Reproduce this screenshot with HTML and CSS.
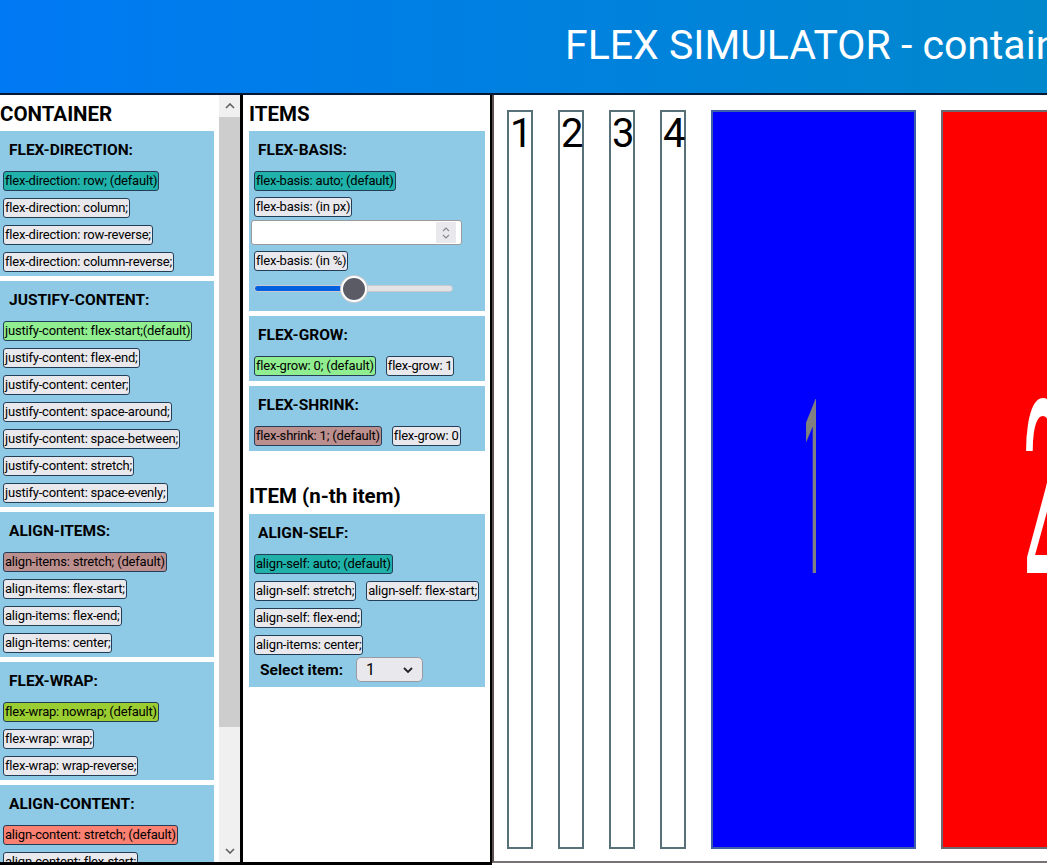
FILE: index.html
```html
<!DOCTYPE html>
<html>
<head>
<meta charset="utf-8">
<link rel="stylesheet" href="styles.css">
</head>
<body>
<header class="header"><h1 class="title">FLEX SIMULATOR - container &amp; items</h1></header>
<main class="main">
  <aside class="container-panel">
    <div class="panel-content">
      <h2 class="panel-title">CONTAINER</h2>
      <section class="group">
        <h3 class="group-title">FLEX-DIRECTION:</h3>
        <div class="btns">
          <div class="row"><button class="btn sel-teal">flex-direction: row; (default)</button></div>
          <div class="row"><button class="btn">flex-direction: column;</button></div>
          <div class="row"><button class="btn">flex-direction: row-reverse;</button></div>
          <div class="row"><button class="btn">flex-direction: column-reverse;</button></div>
        </div>
      </section>
      <section class="group">
        <h3 class="group-title">JUSTIFY-CONTENT:</h3>
        <div class="btns">
          <div class="row"><button class="btn sel-green">justify-content: flex-start;(default)</button></div>
          <div class="row"><button class="btn">justify-content: flex-end;</button></div>
          <div class="row"><button class="btn">justify-content: center;</button></div>
          <div class="row"><button class="btn">justify-content: space-around;</button></div>
          <div class="row"><button class="btn">justify-content: space-between;</button></div>
          <div class="row"><button class="btn">justify-content: stretch;</button></div>
          <div class="row"><button class="btn">justify-content: space-evenly;</button></div>
        </div>
      </section>
      <section class="group">
        <h3 class="group-title">ALIGN-ITEMS:</h3>
        <div class="btns">
          <div class="row"><button class="btn sel-rosy">align-items: stretch; (default)</button></div>
          <div class="row"><button class="btn">align-items: flex-start;</button></div>
          <div class="row"><button class="btn">align-items: flex-end;</button></div>
          <div class="row"><button class="btn">align-items: center;</button></div>
        </div>
      </section>
      <section class="group">
        <h3 class="group-title">FLEX-WRAP:</h3>
        <div class="btns">
          <div class="row"><button class="btn sel-yg">flex-wrap: nowrap; (default)</button></div>
          <div class="row"><button class="btn">flex-wrap: wrap;</button></div>
          <div class="row"><button class="btn">flex-wrap: wrap-reverse;</button></div>
        </div>
      </section>
      <section class="group">
        <h3 class="group-title">ALIGN-CONTENT:</h3>
        <div class="btns">
          <div class="row"><button class="btn sel-salmon">align-content: stretch; (default)</button></div>
          <div class="row"><button class="btn">align-content: flex-start;</button></div>
          <div class="row"><button class="btn">align-content: flex-end;</button></div>
          <div class="row"><button class="btn">align-content: center;</button></div>
        </div>
      </section>
    </div>
    <div class="scrollbar">
      <div class="sb-btn">
        <svg width="10" height="6" viewBox="0 0 10 6"><path d="M1 5 L5 1 L9 5" fill="none" stroke="#606060" stroke-width="1.6"/></svg>
      </div>
      <div class="sb-thumb"></div>
      <div class="sb-track"></div>
      <div class="sb-btn">
        <svg width="10" height="6" viewBox="0 0 10 6"><path d="M1 1 L5 5 L9 1" fill="none" stroke="#606060" stroke-width="1.6"/></svg>
      </div>
    </div>
  </aside>

  <aside class="items-panel">
    <h2 class="panel-title">ITEMS</h2>
    <section class="group">
      <h3 class="group-title">FLEX-BASIS:</h3>
      <div class="btns basis">
        <div class="row"><button class="btn sel-teal">flex-basis: auto; (default)</button></div>
        <div class="row"><button class="btn">flex-basis: (in px)</button></div>
        <div class="num-input">
          <input class="num-field" type="text" value="">
          <span class="spinner">
            <svg width="10" height="16" viewBox="0 0 10 16"><path d="M2 6 L5 3 L8 6" fill="none" stroke="#8a8a8a" stroke-width="1.2"/><path d="M2 10 L5 13 L8 10" fill="none" stroke="#8a8a8a" stroke-width="1.2"/></svg>
          </span>
        </div>
        <div class="row"><button class="btn">flex-basis: (in %)</button></div>
        <div class="slider-row"><input class="slider" type="range" min="0" max="100" value="50"></div>
      </div>
    </section>
    <section class="group">
      <h3 class="group-title">FLEX-GROW:</h3>
      <div class="btns">
        <div class="row"><button class="btn sel-green">flex-grow: 0; (default)</button><button class="btn">flex-grow: 1</button></div>
      </div>
    </section>
    <section class="group">
      <h3 class="group-title">FLEX-SHRINK:</h3>
      <div class="btns">
        <div class="row"><button class="btn sel-rosy">flex-shrink: 1; (default)</button><button class="btn">flex-grow: 0</button></div>
      </div>
    </section>
    <h2 class="panel-title nth">ITEM (n-th item)</h2>
    <section class="group">
      <h3 class="group-title">ALIGN-SELF:</h3>
      <div class="btns">
        <div class="row"><button class="btn sel-teal">align-self: auto; (default)</button></div>
        <div class="row"><button class="btn">align-self: stretch;</button><button class="btn">align-self: flex-start;</button></div>
        <div class="row"><button class="btn">align-self: flex-end;</button></div>
        <div class="row"><button class="btn">align-items: center;</button></div>
      </div>
      <div class="select-row">
        <span class="select-label">Select item:</span>
        <div class="select">
          <span>1</span>
          <svg width="12" height="8" viewBox="0 0 12 8"><path d="M2 2 L6 6 L10 2" fill="none" stroke="#222" stroke-width="1.8"/></svg>
        </div>
      </div>
    </section>
  </aside>

  <section class="display">
    <div class="item thin"><span class="num">1</span></div>
    <div class="item thin"><span class="num">2</span></div>
    <div class="item thin"><span class="num">3</span></div>
    <div class="item thin"><span class="num">4</span></div>
    <div class="item big blue"><span class="big-num">1</span></div>
    <div class="item big red"><span class="big-num">2</span></div>
  </section>
</main>
</body>
</html>
```

FILE: styles.css
```css
* { box-sizing: border-box; }

html, body {
  margin: 0;
  padding: 0;
  height: 100%;
  overflow: hidden;
  background: #ffffff;
  font-family: Roboto, "Liberation Sans", sans-serif;
}

.header {
  height: 95px;
  background: linear-gradient(to right, #0079f4, #0088cc);
  border-bottom: 2px solid #0b1630;
  overflow: hidden;
}

.title {
  margin: 0;
  padding: 21px 0 0 565px;
  font-size: 41px;
  font-weight: 400;
  line-height: 48px;
  color: #ffffff;
  white-space: nowrap;
}

.main {
  display: flex;
  height: 770px;
}

/* Container panel */
.container-panel {
  width: 240px;
  flex: none;
  display: flex;
  border-bottom: 3px solid #000;
}

.panel-content {
  width: 219px;
  padding-right: 5px;
  overflow: hidden;
}

.panel-title {
  margin: 0;
  height: 36px;
  padding-top: 7px;
  font-size: 20.5px;
  font-weight: 700;
  line-height: 24px;
  color: #000;
}

.group {
  background: #8ecae6;
  padding: 0 3px 4px;
  margin-bottom: 5px;
}

.group-title {
  margin: 0;
  padding: 10px 6px 0;
  height: 40px;
  font-size: 15.5px;
  font-weight: 700;
  line-height: 18px;
  color: #000;
}

.btns {
  display: flex;
  flex-direction: column;
  gap: 7px;
}

.row {
  display: flex;
  gap: 10px;
}

.btn {
  height: 20px;
  padding: 0 1px;
  border: 1px solid #243d57;
  border-radius: 3px;
  background: #e9e9ed;
  color: #000;
  font-family: Roboto, "Liberation Sans", sans-serif;
  font-size: 13px;
  line-height: 18px;
  letter-spacing: -0.2px;
  white-space: nowrap;
}

.sel-teal { background: #20b2aa; }
.sel-green { background: #90ee90; }
.sel-rosy { background: #bc8f8f; }
.sel-yg { background: #9acd32; }
.sel-salmon { background: #fa8072; }

/* Scrollbar */
.scrollbar {
  width: 21px;
  flex: none;
  display: flex;
  flex-direction: column;
  background: #f0f0f0;
}

.sb-btn {
  height: 22px;
  display: flex;
  align-items: center;
  justify-content: center;
}

.sb-thumb {
  height: 610px;
  background: #cdcdcd;
}

.sb-track { flex: 1; }

/* Items panel */
.items-panel {
  width: 252px;
  flex: none;
  border-left: 3px solid #000;
  border-right: 2px solid #000;
  border-bottom: 3px solid #000;
  padding: 0 5px 0 6px;
}

.items-panel .btns { padding-left: 2px; }

.items-panel .group { padding-bottom: 5px; }

.basis { gap: 6px; }

.num-input {
  display: flex;
  align-items: center;
  height: 25px;
  width: 211px;
  margin: -3px 0 0 -3px;
  background: #fff;
  border: 1px solid #9a9a9a;
  border-radius: 3px;
  padding-right: 5px;
}

.num-field {
  flex: 1;
  min-width: 0;
  border: 0;
  outline: none;
  background: transparent;
  height: 20px;
}

.spinner {
  width: 20px;
  height: 21px;
  background: #e9e9ed;
  display: flex;
  align-items: center;
  justify-content: center;
}

.slider-row {
  height: 35px;
  display: flex;
  align-items: center;
  margin-top: -6px;
}

.slider {
  -webkit-appearance: none;
  appearance: none;
  width: 199px;
  height: 24px;
  margin: 0;
  background: transparent;
}

.slider::-webkit-slider-runnable-track {
  height: 7px;
  border-radius: 4px;
  background: linear-gradient(to right, #0060df 0 50%, #e3e3e6 50% 100%);
  border: 1px solid #c9c9cf;
}

.slider::-webkit-slider-thumb {
  -webkit-appearance: none;
  appearance: none;
  width: 26px;
  height: 26px;
  margin-top: -10.5px;
  border-radius: 50%;
  background: #5b5b66;
  border: 2px solid #ffffff;
  box-shadow: 0 0 0 1px #c9c9cf;
}

.nth {
  margin-top: 26px;
  height: 37px;
}

.select-row {
  display: flex;
  align-items: center;
  gap: 13px;
  padding: 2px 0 0 8px;
}

.select-label {
  font-size: 15.5px;
  font-weight: 700;
}

.select {
  width: 67px;
  height: 25px;
  display: flex;
  align-items: center;
  justify-content: space-between;
  padding: 0 8px 0 9px;
  background: #e9e9ed;
  border: 1px solid #9a9aa3;
  border-radius: 5px;
  font-size: 16px;
}

/* Display area */
.display {
  flex: 1;
  display: flex;
  gap: 25px;
  padding: 15px 0 12px 13px;
  margin-bottom: 2px;
  border-left: 2px solid #5a5050;
  border-bottom: 2px solid #7a7272;
  overflow: hidden;
}

.item {
  flex: none;
  display: flex;
}

.thin {
  width: 26px;
  border: 2px solid #587078;
  background: #fff;
}

.num {
  font-size: 40px;
  line-height: 47px;
  color: #000;
  padding-left: 1px;
  margin-top: -2px;
}

.big {
  width: 205px;
  align-items: center;
  justify-content: center;
  padding-top: 22px;
}

.blue {
  background: #0000ff;
  border: 2px solid #3d5fa8;
}

.red {
  background: #ff0000;
  border: 2px solid #6e6670;
}

.big-num {
  font-size: 243px;
  line-height: 243px;
  transform: scaleX(0.15);
}

.blue .big-num { color: #808080; }
.red .big-num { color: #ffffff; transform: scaleX(0.3); }
```
